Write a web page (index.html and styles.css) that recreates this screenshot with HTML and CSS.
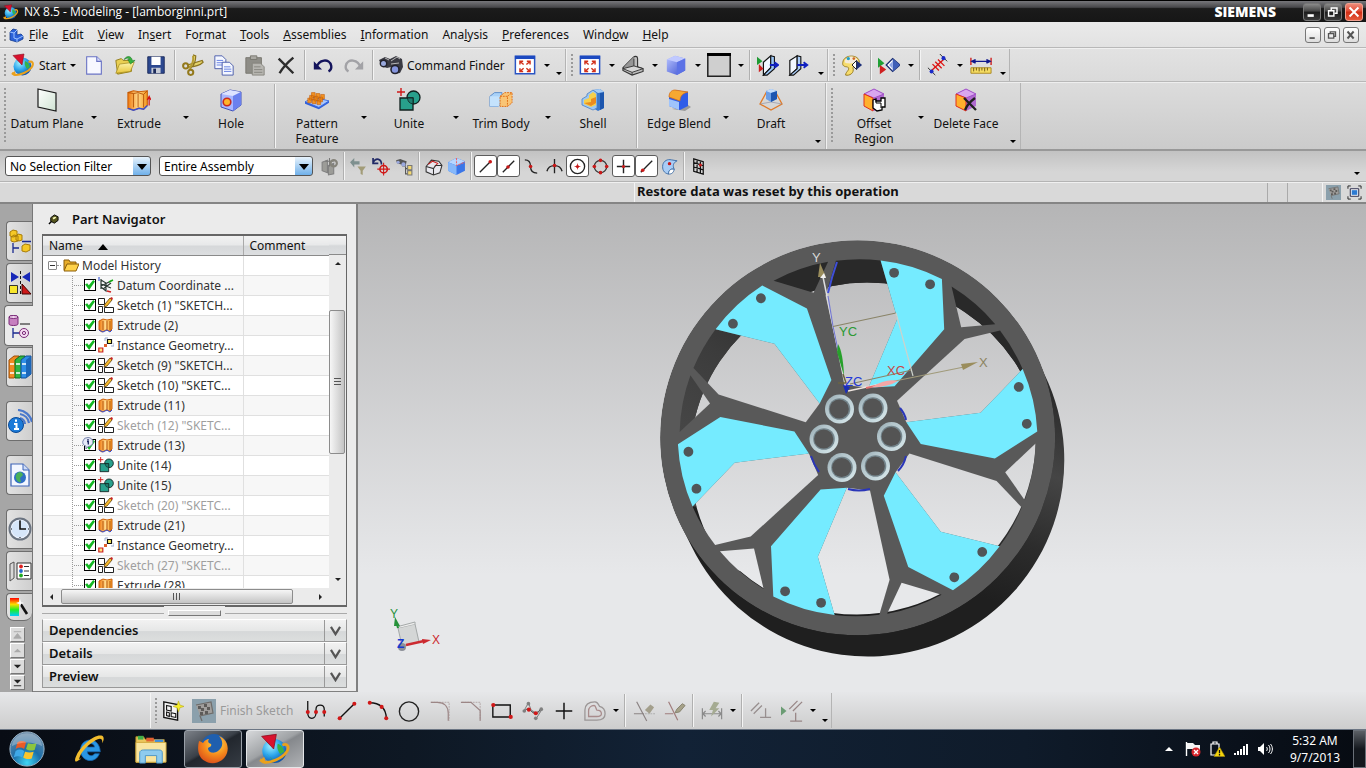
FILE: index.html
```html
<!DOCTYPE html>
<html lang="en">
<head>
  <meta charset="UTF-8" />
  <meta name="viewport" content="width=device-width, initial-scale=1.0" />
  <title>NX 8.5 - Modeling - [lamborginni.prt]</title>
  <link rel="stylesheet" href="styles.css">
</head>
<body>
  <!-- Icon sprite -->
  <svg class="sprite" aria-hidden="true">
    <defs>
      <linearGradient id="gBlue" x1="0" y1="0" x2="1" y2="1"><stop offset="0" stop-color="#b9c4ff"/><stop offset="1" stop-color="#3a50d0"/></linearGradient>
      <linearGradient id="gOrange" x1="0" y1="0" x2="1" y2="0"><stop offset="0" stop-color="#f07a10"/><stop offset=".5" stop-color="#ffd88a"/><stop offset="1" stop-color="#f59a20"/></linearGradient>
      <linearGradient id="gYellow" x1="0" y1="0" x2="0" y2="1"><stop offset="0" stop-color="#fdf6b0"/><stop offset="1" stop-color="#e8c53a"/></linearGradient>
      <linearGradient id="gPlane" x1="0" y1="0" x2="1" y2="1"><stop offset="0" stop-color="#ffffff"/><stop offset="1" stop-color="#cfe3d2"/></linearGradient>
      <radialGradient id="gGlobe" cx=".35" cy=".3" r=".8"><stop offset="0" stop-color="#9ff0ff"/><stop offset=".5" stop-color="#2aa4ec"/><stop offset="1" stop-color="#0b3f96"/></radialGradient>
      <radialGradient id="gOrb" cx=".5" cy=".9" r=".9"><stop offset="0" stop-color="#3fd6f5"/><stop offset=".45" stop-color="#1c6ea8"/><stop offset="1" stop-color="#6d8ca8"/></radialGradient>
      <radialGradient id="gFox" cx=".6" cy=".3" r=".8"><stop offset="0" stop-color="#ffe14a"/><stop offset=".5" stop-color="#f58a1c"/><stop offset="1" stop-color="#d6451a"/></radialGradient>
      <linearGradient id="gRainbow" x1="0" y1="0" x2="0" y2="1"><stop offset="0" stop-color="#f00"/><stop offset=".35" stop-color="#fd0"/><stop offset=".65" stop-color="#2e2"/><stop offset="1" stop-color="#0cf"/></linearGradient>
    </defs>
    <symbol id="i-nx" viewBox="0 0 24 24"><circle cx="11.500" cy="13.500" r="9" fill="url(#gGlobe)"/><path d="M6 16c2 1 3 4 6 5M14 8c3 1 4 3 5 6l-3 2c-1-2-3-4-2-8z" fill="#35b24a"/><path d="M2 19.500c-1 3 4 3.500 11 .5 7-3 10-8 8.500-10.500-.7-1-2-1.200-4-.5" fill="none" stroke="#eaa11c" stroke-width="2"/><path d="M0 21l4-3 1 5z" fill="#eaa11c"/><path d="M2 2.500L13 1l-2 11z" fill="#d9122e" stroke="#8c0d20" stroke-width=".6"/></symbol>
    <symbol id="i-part" viewBox="0 0 16 16"><path d="M2 5l3-3 4 1v5l4-1 2 2v3l-6 3-7-2z" fill="#2b62d9" stroke="#123a8c" stroke-width=".8"/><path d="M2 5l4 1v5l3 1v3M6 6l3-3M9 12l6-3" fill="none" stroke="#9cc2ff"/></symbol>
    <symbol id="i-new" viewBox="0 0 24 24"><path d="M4 3h11l5 5v14H4z" fill="#f7f8ff" stroke="#6a73c4" stroke-width="1.200"/><path d="M15 3v5h5" fill="#d4d9fa" stroke="#6a73c4" stroke-width="1.200"/></symbol>
    <symbol id="i-open" viewBox="0 0 24 24"><path d="M2 7l6-2 2 2h9v12L4 22z" fill="#e9cf52" stroke="#8f7a16"/><path d="M2 21L6 11l16-2-4 10z" fill="url(#gYellow)" stroke="#a38b20" stroke-width=".8"/><path d="M11 6c3-5 8-4 9 1h3l-5 4-3-5h2c-1-2-3-2-6 0z" fill="#36b23e" stroke="#1c7425" stroke-width=".6"/></symbol>
    <symbol id="i-save" viewBox="0 0 24 24"><path d="M3 3h18v18H3z" fill="#2c4890" stroke="#1b2a5a"/><path d="M7 3h10v9H7z" fill="#fff"/><path d="M7 15h10v6H7z" fill="#c6cbd6"/><path d="M9 16h3v5H9z" fill="#1b2a5a"/></symbol>
    <symbol id="i-cut" viewBox="0 0 24 24"><path d="M12 1l3 1c0 6-2 11-6 14M6 12l16-5 1 2c-4 4-9 5-16 5" fill="#e5d36a" stroke="#8a7420" stroke-width="1.300"/><circle cx="4" cy="13" r="2.800" fill="none" stroke="#93791c" stroke-width="2.200"/><circle cx="9.500" cy="20" r="2.800" fill="none" stroke="#93791c" stroke-width="2.200"/><path d="M12 2c1 5-1 10-4 14" fill="none" stroke="#b39b34" stroke-width="2"/></symbol>
    <symbol id="i-copy" viewBox="0 0 24 24"><path d="M2 2h8l4 4v10H2z" fill="#f4f7ff" stroke="#4659a8"/><path d="M4 7h7M4 9.500h8M4 12h8" stroke="#5f7be0"/><path d="M10 9h8l4 4v10H10z" fill="#f4f7ff" stroke="#4659a8"/><path d="M12 14h7M12 16.500h8M12 19h8" stroke="#5f7be0"/></symbol>
    <symbol id="i-paste" viewBox="0 0 24 24"><path d="M2 4h17v17H2z" fill="#8e8d87" stroke="#77766f"/><path d="M7 2h7v4H7z" fill="#a9a8a2" stroke="#77766f"/><path d="M9 10h9l4 4v9H9z" fill="#b6b5b0" stroke="#85847e"/><path d="M11 14h7M11 17h9M11 20h9" stroke="#85847e"/></symbol>
    <symbol id="i-x" viewBox="0 0 24 24"><path d="M4 5l16 16M20 4C14 9 9 14 5 21" fill="none" stroke="#2c2c2c" stroke-width="2.600"/></symbol>
    <symbol id="i-undo" viewBox="0 0 24 24"><path d="M5 15c2-9 14-11 16-2 .4 3-1 5-3 6" fill="none" stroke="#14145c" stroke-width="2.600"/><path d="M2 8v9h9z" fill="#14145c"/></symbol>
    <symbol id="i-redo" viewBox="0 0 24 24"><path d="M19 15C17 6 5 4 3 13c-.4 3 1 5 3 6" fill="none" stroke="#a2a2a6" stroke-width="2.600"/><path d="M22 8v9h-9z" fill="#a2a2a6"/></symbol>
    <symbol id="i-find" viewBox="0 0 24 24"><path d="M0 7l6-3 5 2 6-3 6 3 1 8-3 6-6 1-3-7-4 1-5-2z" fill="#3a3a42"/><circle cx="4.500" cy="10.500" r="3.200" fill="#98a8dc" stroke="#22222c" stroke-width="1.400"/><circle cx="16" cy="16.500" r="4" fill="#8595dd" stroke="#22222c" stroke-width="1.600"/><path d="M6 5l4 2M12 8l6-4 3 2M12 11l8-1" stroke="#b8b8b8" fill="none"/></symbol>
    <symbol id="i-fit" viewBox="0 0 24 24"><path d="M1.500 2.500h21v19h-21z" fill="#fff" stroke="#2a55c4" stroke-width="1.600"/><path d="M1 2h22v3.500H1z" fill="#1c49c0"/><path d="M7 8.500l3.500 3M17 8.500l-3.500 3M7 18.500l3.500-3M17 18.500l-3.500-3M6.500 11.500V8h3.500M14 8h3.500v3.500M6.500 15.500V19h3.500M14 19h3.500v-3.500" fill="none" stroke="#d2311c" stroke-width="1.600"/></symbol>
    <symbol id="i-bracket" viewBox="0 0 24 24"><path d="M3 13l9-9c2-2 5-2 5 1v9l6 2v3l-12 4-10-5v-3z" fill="#bdbdbd" stroke="#333" stroke-width="1.200"/><path d="M3 13l10-10v10l-11 3z" fill="#969696"/><path d="M1 16l12-3 10 3-12 4z" fill="#d6d6d6" stroke="#333"/><path d="M11 20v3M13 13V5" stroke="#333"/></symbol>
    <symbol id="i-cube" viewBox="0 0 24 24"><path d="M2 6l9-4 11 3v13l-9 5-11-4z" fill="url(#gBlue)"/><path d="M2 6l9-4 11 3-9 4z" fill="#c0c9ff"/><path d="M13 9l9-4v13l-9 5z" fill="#5c72e6"/></symbol>
    <symbol id="i-rect" viewBox="0 0 24 24"><path d="M.8.800h22.400v22.400H.8z" fill="#cfcfcf" stroke="#222" stroke-width="1.500"/><path d="M0 0h24v3H0z" fill="#000"/></symbol>
    <symbol id="i-clip" viewBox="0 0 24 24"><path d="M7 9l8-7v13l-8 8z" fill="#f2f8ff" stroke="#111" stroke-width="1.300"/><path d="M15 2l4 1v13l-8 7-4 0 8-8z" fill="#9cc6f6" stroke="#111" stroke-width="1.200"/><path d="M0 3l6 5-6 4z" fill="#1f9a33"/><path d="M2 11l5 5-5 4z" fill="#cc2020"/><path d="M14 12h8m-3-3l4 3-4 3" stroke="#1020c0" stroke-width="2" fill="none"/></symbol>
    <symbol id="i-clip2" viewBox="0 0 24 24"><path d="M2 7l8-5v14l-8 7z" fill="#f2f8ff" stroke="#111" stroke-width="1.300"/><path d="M10 2l4 1v13l-8 7H2l8-7z" fill="#a9cdf8" stroke="#111" stroke-width="1.200"/><path d="M10 12h10m-3-3l4 3-4 3" stroke="#1020c0" stroke-width="2" fill="none"/></symbol>
    <symbol id="i-palette" viewBox="0 0 24 24"><path d="M2 9c1-9 18-9 18 0 0 5-7 4-7 6 2 6-4 9-8 8 0-4 6-6 2-9-3 0-6-1-5-5z" fill="#f6dc6c" stroke="#94761c"/><path d="M4 9c2 2 12 2 14-2-1-6-14-6-14 2z" fill="#f5ead8"/><circle cx="8" cy="5" r="1.800" fill="#20a0c8"/><circle cx="14" cy="5" r="1.500" fill="#d06a20"/><path d="M12 12l5-5v10z" fill="#fff" stroke="#111"/><path d="M17 7l6 5-6 5z" fill="#1d2f78"/></symbol>
    <symbol id="i-showhide" viewBox="0 0 24 24"><path d="M0 4l7 6-7 5z" fill="#1fa035"/><path d="M2 12l7 5-7 5z" fill="#cf2020"/><path d="M9 12l7-7 8 7-8 7z" fill="#fff" stroke="#15286c" stroke-width="1.400"/><path d="M16 5l8 7-8 7z" fill="#3f5fb8"/><path d="M16 8l-4 4 4 4z" fill="#8ea6e6"/></symbol>
    <symbol id="i-dist" viewBox="0 0 24 24"><path d="M1 15l8 8M14 0l8 8" stroke="#222"/><path d="M5 18L18 6" stroke="#d11" stroke-width="1.400"/><path d="M6 11l7 7M9 8.500l7 7M12 6l7 7" stroke="#d11" stroke-width="1.400"/><circle cx="5" cy="19" r="2.200" fill="#1a2ac8"/><circle cx="18" cy="4.500" r="2.200" fill="#1a2ac8"/></symbol>
    <symbol id="i-ruler" viewBox="0 0 24 24"><path d="M1 4v8M23 4v8" stroke="#c11" stroke-width="1.400"/><path d="M2 8h20M6 6L2 8l4 2M18 6l4 2-4 2" stroke="#10188c" stroke-width="1.500" fill="#10188c"/><path d="M1 15h22v6H1z" fill="#f5dc62" stroke="#a8861c"/><path d="M4 15v4M7 15v3M10 15v4M13 15v3M16 15v4M19 15v3" stroke="#6b5310"/></symbol>
    <symbol id="i-datum" viewBox="0 0 24 24"><path d="M3 1l18 4v18L3 19z" fill="url(#gPlane)" stroke="#1a1a1a" stroke-width="1.200"/></symbol>
    <symbol id="i-extrude" viewBox="0 0 26 24"><path d="M1 4l6-2 6 1 9-1v16l-4 4-5-1-6 2-6-2z" fill="url(#gOrange)" stroke="#cc5f08" stroke-width="1.200"/><path d="M7 5v15M12 5v15M18 6v14M1 4l6 1 5-1 6 2 4-4" stroke="#b55408" fill="none"/><path d="M1 21l6 2 6-2 5 1 4-4" stroke="#3a4fd0" stroke-width="1.500" fill="none"/><path d="M24 18V9m-2 3l2-4 2 4" stroke="#d01616" stroke-width="1.300" fill="none"/></symbol>
    <symbol id="i-ext" viewBox="0 0 16 16"><path d="M1 4l4-2 4 1 5-1v10l-2 2-4-1-4 2-3-2z" fill="url(#gOrange)" stroke="#cc5f08"/><path d="M5 4v9M9 4v9M12 4v9" stroke="#b55408"/><path d="M1 13l4 2 4-2 3 2 2-2" stroke="#3a4fd0" fill="none"/></symbol>
    <symbol id="i-hole" viewBox="0 0 24 24"><path d="M2 6l9-4 11 2v13l-8 6-12-4z" fill="#a8b6ff" stroke="#4050b8"/><path d="M2 6l9-4 11 2-8 4z" fill="#dde3ff"/><path d="M14 8l8-4v13l-8 6z" fill="#6a80ee"/><circle cx="8" cy="14" r="3.800" fill="#ffb42a" stroke="#c8281c" stroke-width="1.600"/></symbol>
    <symbol id="i-pattern" viewBox="0 0 26 24"><path d="M0 14l10-5 16 4-11 7z" fill="#a9c8ff" stroke="#3d6be0"/><path d="M0 14v2l15 6 11-7v-2l-11 7z" fill="#2f5fdc"/><g fill="#f39322" stroke="#c05a08" stroke-width=".6"><path d="M7 4h4v5H7zM12 5h4v5h-4zM17 6h4v5h-4zM5 7h4v5H5zM10 8h4v5h-4zM15 9h4v5h-4zM3 10h4v5H3zM8 11h4v5H8zM13 12h4v5h-4z"/></g></symbol>
    <symbol id="i-unite" viewBox="0 0 24 24"><circle cx="16.500" cy="9.500" r="6.500" fill="#28a08c" stroke="#10201e" stroke-width="1.300"/><path d="M3 10h13v12H3z" fill="#28a08c" stroke="#10201e" stroke-width="1.300"/><path d="M10.500 10a6.500 6.500 0 0 0 5.500 6v-6z" fill="#1f7f70" stroke="#10201e" stroke-width=".8"/><path d="M4 0v8M0 4h8" stroke="#d01818" stroke-width="1.400"/></symbol>
    <symbol id="i-trim" viewBox="0 0 26 24"><path d="M1 8l5-4h8v11l-4 4H1z" fill="#a9d2f8" stroke="#5a8ac8"/><path d="M1 8h10v11H1z" fill="#c4e2fc"/><path d="M12 8l5-4h8v11l-5 4h-8z" fill="#f9c576" stroke="#e06a10" stroke-dasharray="2 1"/><path d="M12 8h8v11M20 8l5-4" stroke="#e06a10" fill="none" stroke-dasharray="2 1"/></symbol>
    <symbol id="i-shell" viewBox="0 0 24 24"><path d="M12 2l7-1 4 3v16l-6 3-5-3z" fill="#3a78cc"/><path d="M19 5l4-1v16l-4 2z" fill="#1c56ae"/><path d="M12 2l7-1 4 3-6 1z" fill="#a6cdf6"/><path d="M1 11l5-3V6l6-4 4 3v15l-4 2-11-5z" fill="#9cc8f4" stroke="#4a80c4" stroke-width=".8"/><path d="M3 12l5-2V7l4-3 3 2v11l-5 2-7-3z" fill="#f6d04c"/><path d="M3 15l7 3 5-3V9l-5 2v3z" fill="#ea8c20"/></symbol>
    <symbol id="i-blend" viewBox="0 0 24 24"><path d="M5 21l13 2 6-4-3-2z" fill="#9a9a9a"/><path d="M2 10c0-5 3-7 6-8l13 2v14l-8 4-11-4z" fill="#2e5ce8"/><path d="M2 9c0-5 3-7 6-7l13 2c-5 1-8 4-8 9z" fill="#f6a832" stroke="#d86c10" stroke-width=".7"/><path d="M2 11l10 3v8L2 18z" fill="#9fc4fb"/></symbol>
    <symbol id="i-draft" viewBox="0 0 24 24"><path d="M8 3L1 16l11 6 11-6-7-13" fill="none" stroke="#e07a28" stroke-width="1.300"/><path d="M1 16l11-2 11 2" fill="none" stroke="#889" stroke-width=".6"/><path d="M7 3l5-2 6 2v8l-6 3-5-3z" fill="#6b9ee6"/><path d="M7 3l5-2 6 2-6 2z" fill="#c4dcfa"/><path d="M12 5l6-2v8l-6 3z" fill="#1d55b0"/></symbol>
    <symbol id="i-offset" viewBox="0 0 24 24"><path d="M2 6l10-5 10 5v12l-10 5-10-5z" fill="#b06ad0"/><path d="M2 6l10-5 10 5-10 4z" fill="#d9a6ee" stroke="#a050c8"/><path d="M2 6l9 4v13l-9-5z" fill="#ffb02c" stroke="#e0301c"/><path d="M11 12l3-1v2l5 0v-3h4v9h-3v3l-5 1-4-3z" fill="#fff" stroke="#000" stroke-width="1.300"/><path d="M14 12v3h5v5" fill="none" stroke="#000"/></symbol>
    <symbol id="i-delface" viewBox="0 0 24 24"><path d="M2 6l10-5 10 5v12l-10 5-10-5z" fill="#b06ad0"/><path d="M2 6l10-5 10 5-10 4z" fill="#d9a6ee" stroke="#a050c8"/><path d="M2 6l10 4v13L2 18z" fill="#ffb02c" stroke="#e0301c"/><path d="M10 10l12 12M21 10c-4 3-8 7-10 12" stroke="#202020" stroke-width="2.300" fill="none"/></symbol>
    <symbol id="i-selgrey" viewBox="0 0 18 18"><path d="M2 5l5-2v12l-5-2zM8 8l5-2v10l-5 1z" fill="#9c9c98" stroke="#808080"/><path d="M9 1v8M5 4h8" stroke="#777"/><circle cx="13" cy="6" r="3" fill="none" stroke="#85837a" stroke-width="2"/></symbol>
    <symbol id="i-filter" viewBox="0 0 18 18"><path d="M1 5l4-4v3h5v3H5v3z" fill="#7e908f"/><path d="M8 9h8l-3 4v4l-2-1v-3z" fill="#a29c78"/></symbol>
    <symbol id="i-target" viewBox="0 0 18 18"><path d="M1 5c3-5 8-3 8 2M1 1v5h5" stroke="#222a66" stroke-width="1.600" fill="none"/><circle cx="11" cy="11.500" r="3.500" fill="none" stroke="#d01818" stroke-width="1.500"/><path d="M11 5.500v12M5 11.500h12" stroke="#d01818"/></symbol>
    <symbol id="i-findtree" viewBox="0 0 18 18"><path d="M1 3l4-1 3 1 3 1-1 5H7L6 7 2 6z" fill="#555"/><circle cx="3" cy="5" r="1.500" fill="#9aa8dd"/><circle cx="8" cy="7" r="2" fill="#9aa8dd"/><path d="M10 9v7h3M10 11h3" stroke="#555" fill="none"/><path d="M12 8h4v4h-4zM12 13h4v4h-4z" fill="#f3d870" stroke="#777"/></symbol>
    <symbol id="i-wirebox" viewBox="0 0 18 18"><path d="M2 9l5-6 7 1 3 4-2 7-6 2-7-3z" fill="#e8e8ee" stroke="#333"/><path d="M4 7l4-3 5 2-3 3" stroke="#c22" fill="none"/><path d="M2 9l7 2 2-3 6 0M9 11v6" fill="none" stroke="#333"/></symbol>
    <symbol id="i-bluebox" viewBox="0 0 18 18"><path d="M1 5l8-4 8 3v9l-8 4-8-4z" fill="#3b76e8"/><path d="M1 5l8-4 8 3-8 4z" fill="#b8d7ff"/><path d="M1 5l8 3v9l-8-4z" fill="#86b8fa"/><path d="M9 1v7l8-3" stroke="#e66" fill="none" stroke-dasharray="2 1"/></symbol>
    <symbol id="i-end" viewBox="0 0 20 20"><path d="M4 16L15 5" stroke="#222" stroke-width="1.400"/><circle cx="15" cy="5" r="1.900" fill="#c81818"/></symbol>
    <symbol id="i-mid" viewBox="0 0 20 20"><path d="M4 16L16 4" stroke="#222" stroke-width="1.400"/><circle cx="9.500" cy="10.500" r="1.900" fill="#c81818"/></symbol>
    <symbol id="i-curve" viewBox="0 0 20 20"><path d="M3 3c5 0 6 3 6 7s2 7 7 7" fill="none" stroke="#222" stroke-width="1.400"/><circle cx="9" cy="10" r="1.900" fill="#c81818"/></symbol>
    <symbol id="i-inter" viewBox="0 0 20 20"><path d="M10 2v15M2 15C4 7 16 7 18 15" fill="none" stroke="#222" stroke-width="1.400"/><circle cx="10" cy="9" r="1.900" fill="#c81818"/></symbol>
    <symbol id="i-center" viewBox="0 0 20 20"><circle cx="10" cy="10" r="7.500" fill="none" stroke="#222" stroke-width="1.400"/><circle cx="10" cy="10" r="1.700" fill="#c81818"/><path d="M7 10h6M10 7v6" stroke="#c81818" stroke-width=".8"/></symbol>
    <symbol id="i-quad" viewBox="0 0 20 20"><circle cx="10" cy="10" r="6.500" fill="none" stroke="#333" stroke-width="1.400"/><g fill="#c81818"><circle cx="10" cy="3.500" r="1.900"/><circle cx="10" cy="16.500" r="1.900"/><circle cx="3.500" cy="10" r="1.900"/><circle cx="16.500" cy="10" r="1.900"/></g></symbol>
    <symbol id="i-plus" viewBox="0 0 20 20"><path d="M10 3v14M3 10h14" stroke="#222" stroke-width="1.500"/><circle cx="10" cy="10" r="1.700" fill="#c81818"/></symbol>
    <symbol id="i-oncurve" viewBox="0 0 20 20"><path d="M4 16L16 4" stroke="#222" stroke-width="1.400"/><circle cx="6" cy="14" r="1.900" fill="#c81818"/></symbol>
    <symbol id="i-onface" viewBox="0 0 20 20"><path d="M3 8c1-4 5-6 9-5l6 1c-4 2-5 5-3 9-4-1-6 1-6 5-5-1-7-5-6-10z" fill="#a9cdf6" stroke="#3f6fa8"/><path d="M15 13c-1 4-3 5-6 5 0-4 2-6 6-5z" fill="#fff" stroke="#3f6fa8"/><circle cx="10" cy="7" r="1.800" fill="#c81818"/></symbol>
    <symbol id="i-grid" viewBox="0 0 20 20"><path d="M5 2l10 3v13L5 15zM8.500 3v13M12 4v13M5 6l10 3M5 10.500l10 3" fill="none" stroke="#111" stroke-width="1.300"/><circle cx="12" cy="8.500" r="1.600" fill="#c81818"/></symbol>
    <symbol id="i-flag" viewBox="0 0 24 24"><path d="M0 0h24v24H0z" fill="#8ba0ac"/><path d="M4 6l15-3 2 11-13 3 2 5" fill="#a09e9c" stroke="#6e6c6a" stroke-width="1.200"/><path d="M6 7h3v3H6zM12 5h3v3h-3zM9 9h3v3H9zM15 8h3v3h-3zM8 13h3v3H8zM13 12h3v3h-3z" fill="#5d5b59"/></symbol>
    <symbol id="i-full" viewBox="0 0 16 16"><path d="M1 4V1h3M12 1h3v3M15 12v3h-3M4 15H1v-3" fill="none" stroke="#222"/><path d="M3.500 4h9v8h-9z" fill="#fff" stroke="#224"/><path d="M5 5.500h6v5H5z" fill="#2c7ad2"/></symbol>
    <symbol id="i-pin" viewBox="0 0 12 12"><path d="M1 11l3-3" stroke="#000" stroke-width="1.500"/><path d="M3 4l4-3 4 2v4L7 10 3 8z" fill="#55551e" stroke="#000"/><path d="M5 4l3-1 1 1-3 2z" fill="#ffffc0"/></symbol>
    <!-- resource bar -->
    <symbol id="i-asm" viewBox="0 0 24 24"><path d="M2 3l3-2 4 1v5l-4 1-3-1zM3 8l3-2 4 1v5l-4 1-3-1zM8 7l2-2 4 1v5l-3 1-3-1zM14 17l3-2 5 1v5l-4 2-4-1z" fill="#f5c826" stroke="#a87c08"/><path d="M14 12.500h9M5 14v10M5 19h6" stroke="#1a2a90" stroke-width="1.300"/></symbol>
    <symbol id="i-constraint" viewBox="0 0 24 24"><path d="M3 1l8 5-8 5zM22 1l-8 5 8 5z" fill="#1728b8"/><path d="M12.500 0v24" stroke="#111" stroke-dasharray="3 2"/><path d="M1.500 14.500h8v8h-8z" fill="#f7e62c" stroke="#333"/><path d="M14 13v10h9z" fill="#cc1818" stroke="#400"/></symbol>
    <symbol id="i-partnav" viewBox="0 0 24 24"><path d="M2 3c0-2 9-2 9 0v7c0 2-9 2-9 0z" fill="#c67fc0" stroke="#7a2a78"/><ellipse cx="6.500" cy="3" rx="4.500" ry="1.500" fill="#f2d4f0" stroke="#7a2a78"/><path d="M13 10h10" stroke="#111"/><path d="M6 14v10M6 19h6" stroke="#1a2a90" stroke-width="1.300"/><circle cx="17" cy="19" r="4.500" fill="#f5dcf2" stroke="#7a2a78"/><circle cx="17" cy="19" r="1.600" fill="none" stroke="#7a2a78"/></symbol>
    <symbol id="i-books" viewBox="0 0 24 24"><path d="M1 5l5-4h5v18l-5 4H1z" fill="#ef8a20" stroke="#9c4c08"/><path d="M7 5l5-4h5v18l-5 4H7z" fill="#2eb440" stroke="#0f6a20"/><path d="M13 5l5-4h5v18l-5 4h-5z" fill="#2f8ee6" stroke="#134c94"/><path d="M18 5l5-4v18l-5 4z" fill="#1b66b8"/><path d="M2 9h4M8 9h4M14 9h4M2 18h4M8 18h4M14 18h4" stroke="#fff" stroke-width="1.300"/></symbol>
    <symbol id="i-info" viewBox="0 0 24 24"><path d="M12 9a7 7 0 0 1 5 6M12 5a11 11 0 0 1 9 9M10 1a15 15 0 0 1 14 12" fill="none" stroke="#4a78cc" stroke-width="2.200"/><circle cx="8" cy="16" r="7.500" fill="#1b7ad8" stroke="#0b4a96"/><path d="M8 10.500v2.200M6 15h2.500v5M6 20h5" stroke="#fff" stroke-width="2" fill="none"/></symbol>
    <symbol id="i-web" viewBox="0 0 24 24"><path d="M3 1h12l6 6v16H3z" fill="#f2f6ff" stroke="#3e65b8" stroke-width="1.200"/><path d="M15 1v6h6" fill="#cfdcf6" stroke="#3e65b8"/><circle cx="12" cy="14.500" r="6" fill="#2f6fc4"/><path d="M8 12c2-4 6-4 7 0l-3 3 1 4c-3 1-6-3-5-7z" fill="#48b058"/></symbol>
    <symbol id="i-clock" viewBox="0 0 24 24"><circle cx="12" cy="12" r="10.500" fill="#eef4ff" stroke="#6a7380" stroke-width="2"/><circle cx="12" cy="12" r="8.500" fill="#d6e6fa"/><path d="M12 4v8h6" fill="none" stroke="#111" stroke-width="1.600"/><path d="M12 3v1M12 20v1M3 12h1M20 12h1" stroke="#111"/></symbol>
    <symbol id="i-roles" viewBox="0 0 24 24"><path d="M2 5l4-2v16l-4 3z" fill="#d8d8d8" stroke="#555"/><path d="M9 4h14v16H9z" fill="#fff" stroke="#333"/><circle cx="13" cy="7.500" r="1.900" fill="#d22"/><circle cx="13" cy="12" r="1.900" fill="#26c"/><circle cx="13" cy="16.500" r="1.900" fill="#2a2"/><path d="M16 7.500h5M16 12h5M16 16.500h5" stroke="#333"/></symbol>
    <symbol id="i-wand" viewBox="0 0 24 20"><path d="M2 1h9v18H2z" fill="url(#gRainbow)"/><path d="M12 6l7 11" stroke="#111" stroke-width="2.600"/><path d="M12 2l1 3 3 1-3 1-1 3-1-3-3-1 3-1z" fill="#fff"/></symbol>
    <!-- tree -->
    <symbol id="t-folder" viewBox="0 0 16 14"><path d="M1 12V2h5l1 2h6v3" fill="#e8ad28" stroke="#8a5c08"/><path d="M1 13l3-7h12l-3 7z" fill="#ffd24a" stroke="#8a5c08"/></symbol>
    <symbol id="t-csys" viewBox="0 0 16 16"><path d="M3 2v10M3 3l5 3v8l-5-4M3 9l10-5M3 7l10 4M5 12l8-6" fill="none" stroke="#2c3a34" stroke-width="1.200"/><path d="M1 0v4" stroke="#24c"/><path d="M11 5l4-2" stroke="#1a1" stroke-width="1.500"/><path d="M9 14l4 1" stroke="#c22" stroke-width="1.500"/></symbol>
    <symbol id="t-sketch" viewBox="0 0 16 16"><path d="M.5 1.500h6v6h-6zM.5 9.500h4v6h-4zM6.500 10.500h9v5h-9z" fill="#fff" stroke="#222"/><path d="M6 10l1-3 5-6 2 2-5 6z" fill="#f6b82c" stroke="#5c3c08" stroke-width=".8"/><path d="M12 1l2-1 1 2-1 1z" fill="#c22"/></symbol>
    <symbol id="t-inst" viewBox="0 0 16 16"><path d="M.8 11h4v4h-4z" fill="#ffe27a" stroke="#c22" stroke-width="1.200"/><path d="M9.500 2.500h4v4h-4z" fill="#fff05a" stroke="#111" stroke-width="1.200"/><path d="M6 7h3v3H6z" fill="#e0602a"/><path d="M7 4V1h3M13 9h3V6" fill="none" stroke="#99a8cc"/></symbol>
    <symbol id="t-info" viewBox="0 0 12 13"><path d="M6 .5a5 4.500 0 0 1 0 9L4 12V9.200A5 4.500 0 0 1 6 .5z" fill="#e6eaf8" stroke="#7884ac"/><path d="M6 2v1.400M5 4.500h1.300V7.500" stroke="#1a2460" stroke-width="1.300" fill="none"/></symbol>
    <!-- sketch toolbar -->
    <symbol id="s-task" viewBox="0 0 24 24"><path d="M2 2l15 3v17L2 19z" fill="#f4f4f4" stroke="#111" stroke-width="1.500"/><path d="M5 6l5 1v5l-5-1zM5 13l3 1v4l-3-1zM10 14l5 1v4l-5-1z" fill="none" stroke="#111" stroke-width="1.200"/><path d="M18 1l1.500 4.500L24 7l-4.500 1.500L18 13l-1.500-4.500L12 7l4.500-1.500z" fill="#f4ec2a" stroke="#b8a810" stroke-width=".6"/></symbol>
    <symbol id="s-profile" viewBox="0 0 24 24"><path d="M3 1v13c0 8 9 8 9 0V10c0-6 9-6 9 0v8" fill="none" stroke="#111" stroke-width="1.400"/><g fill="#d01818"><circle cx="3" cy="13" r="2.200"/><circle cx="12" cy="13" r="2.200"/><circle cx="21" cy="13" r="2.200"/></g></symbol>
    <symbol id="s-line" viewBox="0 0 24 24"><path d="M4 20L20 4" stroke="#111" stroke-width="1.500"/><g fill="#d01818"><circle cx="4" cy="20" r="2.200"/><circle cx="20" cy="4" r="2.200"/></g></symbol>
    <symbol id="s-arc" viewBox="0 0 24 24"><path d="M3 3c11 0 18 6 18 17" fill="none" stroke="#111" stroke-width="1.500"/><g fill="#d01818"><circle cx="3" cy="3" r="2.200"/><circle cx="16" cy="7.500" r="2.200"/><circle cx="21" cy="20" r="2.200"/></g></symbol>
    <symbol id="s-circle" viewBox="0 0 24 24"><circle cx="12" cy="12.500" r="10.500" fill="none" stroke="#222" stroke-width="1.500"/></symbol>
    <symbol id="s-fillet" viewBox="0 0 24 24"><path d="M2 2.500h20v20" fill="none" stroke="#b0a4a4" stroke-dasharray="2 1"/><path d="M2 2.500h7c8 0 12 5 12 12v8" fill="none" stroke="#9c8686" stroke-width="1.300"/></symbol>
    <symbol id="s-chamfer" viewBox="0 0 24 24"><path d="M2 2.500h20v20" fill="none" stroke="#b0a4a4" stroke-dasharray="2 1"/><path d="M1 2.500h11l10 9v11" fill="none" stroke="#9c8686" stroke-width="1.300"/></symbol>
    <symbol id="s-rect" viewBox="0 0 24 24"><path d="M2 5.500h19v13H2z" fill="none" stroke="#111" stroke-width="1.500"/><g fill="#d01818"><circle cx="2.500" cy="5.500" r="2.300"/><circle cx="21.500" cy="18.500" r="2.300"/></g></symbol>
    <symbol id="s-spline" viewBox="0 0 24 24"><path d="M2 12L7 3l3 8 7 4 5-5-7 11" fill="none" stroke="#777"/><path d="M2 13c4-6 7-2 9 0s6 2 10-4" fill="none" stroke="#222"/><g fill="#808080"><circle cx="7" cy="4" r="2"/><circle cx="2.500" cy="12" r="2"/><circle cx="21" cy="10" r="2"/><circle cx="15" cy="20" r="2"/></g><g fill="#d01818"><circle cx="7.500" cy="10.500" r="2.200"/><circle cx="15" cy="14.500" r="2.200"/></g></symbol>
    <symbol id="s-point" viewBox="0 0 24 24"><path d="M12 3v18M3 12h18" stroke="#111" stroke-width="1.600"/></symbol>
    <symbol id="s-offset" viewBox="0 0 24 24"><path d="M1 22V11c0-6 4-9 11-9 3 0 4 3 5 5 4 1 6 4 6 8 0 5-4 7-9 7z" fill="none" stroke="#9b9696" stroke-width="1.400"/><path d="M5 18v-6c0-4 3-6 6-6 2 0 2 4 3 5 4 0 5 2 5 4s-2 3-5 3z" fill="none" stroke="#a88c8c" stroke-width="1.400"/></symbol>
    <symbol id="s-trim" viewBox="0 0 24 24"><path d="M4 2l11 21M1 15h11" stroke="#8c8484" stroke-width="1.300"/><path d="M13 15h11" stroke="#aaa" stroke-dasharray="2 1"/><path d="M13 11l6-6 4 3-5 7z" fill="#a39f8c"/></symbol>
    <symbol id="s-extend" viewBox="0 0 24 24"><path d="M5 2l10 20M1 15h9" stroke="#a07c7c" stroke-width="1.300"/><path d="M12 14l2-4 6-6 3 2-6 7z" fill="#a5a188" stroke="#84806c"/></symbol>
    <symbol id="s-dim" viewBox="0 0 24 24"><path d="M1.500 9v12M22.500 9v12M2 15h20M5 12l-3 3 3 3M19 12l3 3-3 3" fill="none" stroke="#8a8a8a" stroke-width="1.300"/><path d="M14 2l6 1-4 6h4l-9 9 2-7H9z" fill="#a5ab92"/></symbol>
    <symbol id="s-constr" viewBox="0 0 24 24"><path d="M1 12L10 3M4 15L13 6M11 19h12M17 9v10" stroke="#988f8f" stroke-width="1.400"/></symbol>
    <symbol id="s-infer" viewBox="0 0 24 24"><path d="M0 7l6 5-6 5z" fill="#6b9c74"/><path d="M9 10L18 1M13 12L23 2M10 23h13M16 14v9" stroke="#988686" stroke-width="1.400"/></symbol>
    <!-- taskbar -->
    <symbol id="b-start" viewBox="0 0 40 40"><circle cx="20" cy="20" r="18" fill="url(#gOrb)" stroke="#9fb8cc"/><path d="M10 13c3-2 6-2 9 0l-2 7c-3-2-6-2-9 0z" fill="#ea5b26"/><path d="M21 14c3 1 6 1 9 0l-2 7c-3 1-6 1-9-1z" fill="#8cc63f"/><path d="M8 22c3-2 6-2 9 0l-2 7c-3-2-6-2-9 0z" fill="#3fa9e8"/><path d="M18 23c3 1 6 1 9 0l-2 7c-3 1-6 1-9-1z" fill="#fbc52c"/><path d="M4 17c2-18 30-18 32 0-10-5-22-5-32 0z" fill="#fff" opacity=".28"/></symbol>
    <symbol id="b-ie" viewBox="0 0 34 34"><path d="M28 22c-4 11-19 9-20-3C7 5 28 2 29 20H15c1 5 6 5 8 2zM15 15h8c-1-5-7-5-8 0z" fill="#2a96e4" stroke="#1568b4" stroke-width=".8"/><path d="M9 26C3 33 0 31 4 23 9 13 24 0 31 3c3 2 1 6 0 8 1-6-3-6-9-2C12 15 5 26 7 29z" fill="#f2bd2e"/></symbol>
    <symbol id="b-folder" viewBox="0 0 34 32"><path d="M1 3h8l2 3h20v24H1z" fill="#ecc75c" stroke="#b78d24"/><path d="M3 2h6v4H3z" fill="#3fae49"/><path d="M12 4h8v4h-8z" fill="#e06030"/><path d="M21 6h9v3h-9z" fill="#3f8fe0"/><path d="M1 9h32v21H1z" fill="#f9e5a0" stroke="#d0a93e"/><path d="M5 31V20c0-2 2-3 4-3h16c3 0 4 1 4 3v11h-6v-8H11v8z" fill="#8ecbee" stroke="#4b94c6"/></symbol>
    <symbol id="b-firefox" viewBox="0 0 32 32"><circle cx="17" cy="14" r="13" fill="#1f5fae"/><path d="M2 8c2 1 3 1 4 2 2-3 4-4 6-4-2 3 0 4 2 5 1 2-1 3-3 4 0 5 6 6 10 3 6-4 5-11 1-15 8 3 10 11 8 17-3 9-14 13-22 8C1 24 0 16 2 8z" fill="url(#gFox)"/></symbol>
    <symbol id="b-flag" viewBox="0 0 16 16"><path d="M1.500 1v14" stroke="#fff" stroke-width="1.400"/><path d="M2 2h6l2 2h5v5H9L7 8H2z" fill="#f4f4f4"/><circle cx="11" cy="11" r="4.500" fill="#d8262c"/><path d="M9 9l4 4M13 9l-4 4" stroke="#fff" stroke-width="1.400"/></symbol>
    <symbol id="b-battery" viewBox="0 0 16 16"><path d="M2 3h8v11H2zM4 1h4v2H4z" fill="none" stroke="#fff" stroke-width="1.200"/><path d="M10.500 6L16 15.500H5z" fill="#f5d40c" stroke="#9a8408" stroke-width=".6"/><path d="M10.500 9v3.200M10.500 13v1.500" stroke="#111" stroke-width="1.300"/></symbol>
    <symbol id="b-signal" viewBox="0 0 16 16"><path d="M1 12h2v2H1zM4 10h2v4H4zM7 8h2v6H7zM10 5h2v9h-2zM13 3h2v11h-2z" fill="#fff"/></symbol>
    <symbol id="b-volume" viewBox="0 0 16 16"><path d="M1 6h2l4-4v12l-4-4H1z" fill="#fff"/><path d="M9.500 6c1 1 1 3 0 4M11.500 4c2 2 2 6 0 8M13.500 3c2.500 3 2.500 7 0 10" fill="none" stroke="#fff"/></symbol>
  </svg>

  <header class="titlebar">
    <svg class="ico16"><use href="#i-nx"/></svg>
    <h1>NX 8.5 - Modeling - [lamborginni.prt]</h1>
    <span class="brand">SIEMENS</span>
    <div class="win-buttons">
      <button type="button" aria-label="Minimize"><svg viewBox="0 0 18 18"><path d="M4 13h7" stroke="#fff" stroke-width="3"/></svg></button>
      <button type="button" aria-label="Restore"><svg viewBox="0 0 18 18"><path d="M4 7.500h6v6H4zM7 7V4.500h6.500v6H11" fill="none" stroke="#fff" stroke-width="1.600"/></svg></button>
      <button type="button" class="close" aria-label="Close"><svg viewBox="0 0 18 18"><path d="M4 4l10 10M14 4L4 14" stroke="#fff" stroke-width="2.200"/></svg></button>
    </div>
  </header>

  <nav class="menubar">
    <span class="grip"></span>
    <svg class="ico16"><use href="#i-part"/></svg>
    <ul>
      <li><a href="#"><u>F</u>ile</a></li>
      <li><a href="#"><u>E</u>dit</a></li>
      <li><a href="#"><u>V</u>iew</a></li>
      <li><a href="#">In<u>s</u>ert</a></li>
      <li><a href="#">Fo<u>r</u>mat</a></li>
      <li><a href="#"><u>T</u>ools</a></li>
      <li><a href="#"><u>A</u>ssemblies</a></li>
      <li><a href="#"><u>I</u>nformation</a></li>
      <li><a href="#">Ana<u>l</u>ysis</a></li>
      <li><a href="#"><u>P</u>references</a></li>
      <li><a href="#">Wind<u>o</u>w</a></li>
      <li><a href="#"><u>H</u>elp</a></li>
    </ul>
    <div class="doc-buttons">
      <button type="button" aria-label="Minimize part"><svg viewBox="0 0 16 16"><path d="M4 11.500h6" stroke="#555" stroke-width="2"/></svg></button>
      <button type="button" aria-label="Restore part"><svg viewBox="0 0 16 16"><path d="M4 6.500h6v5H4zM6 6V4.500h6v5h-2" fill="none" stroke="#555" stroke-width="1.500"/></svg></button>
      <button type="button" aria-label="Close part"><svg viewBox="0 0 16 16"><path d="M4 4l7 8M11 4l-7 8" stroke="#555" stroke-width="2.200"/></svg></button>
    </div>
  </nav>

  <div class="toolbars row-standard">
    <div class="group">
      <span class="grip"></span>
      <button type="button" class="text-tool"><svg class="ico24"><use href="#i-nx"/></svg>Start<i class="tri"></i></button>
      <button type="button" class="tool" aria-label="New"><svg><use href="#i-new"/></svg></button>
      <button type="button" class="tool" aria-label="Open"><svg><use href="#i-open"/></svg></button>
      <button type="button" class="tool" aria-label="Save"><svg><use href="#i-save"/></svg></button>
      <span class="sep"></span>
      <button type="button" class="tool" aria-label="Cut"><svg><use href="#i-cut"/></svg></button>
      <button type="button" class="tool" aria-label="Copy"><svg><use href="#i-copy"/></svg></button>
      <button type="button" class="tool" aria-label="Paste"><svg><use href="#i-paste"/></svg></button>
      <button type="button" class="tool" aria-label="Delete"><svg><use href="#i-x"/></svg></button>
      <span class="sep"></span>
      <button type="button" class="tool" aria-label="Undo"><svg><use href="#i-undo"/></svg></button>
      <button type="button" class="tool" aria-label="Redo"><svg><use href="#i-redo"/></svg></button>
      <span class="sep"></span>
      <button type="button" class="text-tool finder"><svg class="ico24"><use href="#i-find"/></svg>Command Finder</button>
      <button type="button" class="tool" aria-label="Fit"><svg><use href="#i-fit"/></svg></button>
      <button type="button" class="drop" aria-label="Fit options"></button>
      <button type="button" class="drop low" aria-label="Toolbar options"></button>
    </div>
    <div class="group">
      <span class="grip"></span>
      <button type="button" class="tool" aria-label="Fit view"><svg><use href="#i-fit"/></svg></button>
      <button type="button" class="drop" aria-label="Fit view options"></button>
      <button type="button" class="tool" aria-label="Orient view"><svg><use href="#i-bracket"/></svg></button>
      <button type="button" class="drop" aria-label="Orient options"></button>
      <button type="button" class="tool" aria-label="Shaded"><svg><use href="#i-cube"/></svg></button>
      <button type="button" class="drop" aria-label="Shading options"></button>
      <button type="button" class="tool swatch" aria-label="Background"><svg><use href="#i-rect"/></svg></button>
      <button type="button" class="drop" aria-label="Background options"></button>
      <span class="sep"></span>
      <button type="button" class="tool" aria-label="Clip section"><svg><use href="#i-clip"/></svg></button>
      <button type="button" class="tool" aria-label="Edit section"><svg><use href="#i-clip2"/></svg></button>
      <button type="button" class="drop low" aria-label="Toolbar options"></button>
    </div>
    <div class="group">
      <span class="grip"></span>
      <button type="button" class="tool" aria-label="Edit object display"><svg><use href="#i-palette"/></svg></button>
      <span class="sep"></span>
      <button type="button" class="tool" aria-label="Show and hide"><svg><use href="#i-showhide"/></svg></button>
      <button type="button" class="drop" aria-label="Show and hide options"></button>
      <span class="sep"></span>
      <button type="button" class="tool" aria-label="Measure distance"><svg><use href="#i-dist"/></svg></button>
      <button type="button" class="drop" aria-label="Measure options"></button>
      <button type="button" class="tool" aria-label="Simple distance"><svg><use href="#i-ruler"/></svg></button>
      <button type="button" class="drop low" aria-label="Toolbar options"></button>
    </div>
  </div>

  <div class="toolbars row-feature">
    <div class="group">
      <span class="grip"></span>
      <button type="button" class="feature"><svg><use href="#i-datum"/></svg>Datum Plane</button>
      <button type="button" class="drop" aria-label="Datum options"></button>
      <button type="button" class="feature"><svg><use href="#i-extrude"/></svg>Extrude</button>
      <button type="button" class="drop" aria-label="Extrude options"></button>
      <button type="button" class="feature"><svg><use href="#i-hole"/></svg>Hole</button>
      <span class="sep"></span>
      <button type="button" class="feature"><svg><use href="#i-pattern"/></svg>Pattern Feature</button>
      <button type="button" class="drop" aria-label="Pattern options"></button>
      <button type="button" class="feature"><svg><use href="#i-unite"/></svg>Unite</button>
      <button type="button" class="drop" aria-label="Unite options"></button>
      <button type="button" class="feature"><svg><use href="#i-trim"/></svg>Trim Body</button>
      <button type="button" class="drop" aria-label="Trim options"></button>
      <button type="button" class="feature"><svg><use href="#i-shell"/></svg>Shell</button>
      <span class="sep"></span>
      <button type="button" class="feature"><svg><use href="#i-blend"/></svg>Edge Blend</button>
      <button type="button" class="drop" aria-label="Blend options"></button>
      <button type="button" class="feature"><svg><use href="#i-draft"/></svg>Draft</button>
      <button type="button" class="drop low" aria-label="Toolbar options"></button>
    </div>
    <div class="group">
      <span class="grip"></span>
      <button type="button" class="feature"><svg><use href="#i-offset"/></svg>Offset Region</button>
      <button type="button" class="drop" aria-label="Offset options"></button>
      <button type="button" class="feature"><svg><use href="#i-delface"/></svg>Delete Face</button>
      <button type="button" class="drop low" aria-label="Toolbar options"></button>
    </div>
  </div>

  <div class="selection-bar">
    <span class="combo filter"><select aria-label="Selection filter"><option>No Selection Filter</option></select><i class="tri"></i></span>
    <span class="combo scope"><select aria-label="Selection scope"><option>Entire Assembly</option></select><i class="tri"></i></span>
    <button type="button" class="snap" aria-label="General filters"><svg><use href="#i-selgrey"/></svg></button>
    <span class="sep"></span>
    <button type="button" class="snap" aria-label="Reset filters"><svg><use href="#i-filter"/></svg></button>
    <button type="button" class="snap" aria-label="Allow selection"><svg><use href="#i-target"/></svg></button>
    <button type="button" class="snap" aria-label="Find in navigator"><svg><use href="#i-findtree"/></svg></button>
    <span class="sep"></span>
    <button type="button" class="snap" aria-label="Hidden wireframe"><svg><use href="#i-wirebox"/></svg></button>
    <button type="button" class="snap" aria-label="Shaded body"><svg><use href="#i-bluebox"/></svg></button>
    <span class="sep"></span>
    <button type="button" class="snap on" aria-label="End point"><svg><use href="#i-end"/></svg></button>
    <button type="button" class="snap on" aria-label="Mid point"><svg><use href="#i-mid"/></svg></button>
    <button type="button" class="snap" aria-label="Control point"><svg><use href="#i-curve"/></svg></button>
    <button type="button" class="snap" aria-label="Intersection"><svg><use href="#i-inter"/></svg></button>
    <button type="button" class="snap on" aria-label="Arc center"><svg><use href="#i-center"/></svg></button>
    <button type="button" class="snap" aria-label="Quadrant point"><svg><use href="#i-quad"/></svg></button>
    <button type="button" class="snap on" aria-label="Existing point"><svg><use href="#i-plus"/></svg></button>
    <button type="button" class="snap on" aria-label="Point on curve"><svg><use href="#i-oncurve"/></svg></button>
    <button type="button" class="snap" aria-label="Point on face"><svg><use href="#i-onface"/></svg></button>
    <span class="sep"></span>
    <button type="button" class="snap" aria-label="Grid point"><svg><use href="#i-grid"/></svg></button>
    <button type="button" class="drop low last" aria-label="Toolbar options"></button>
  </div>

  <div class="status-line">
    <span class="cue"></span>
    <span class="message">Restore data was reset by this operation</span>
    <span class="cell"></span>
    <span class="cell wide"></span>
    <span class="icons"><svg><use href="#i-flag"/></svg><svg><use href="#i-full"/></svg></span>
  </div>

  <main class="workspace">
    <div class="resource-bar">
      <button type="button" class="tab" aria-label="Assembly Navigator"><svg><use href="#i-asm"/></svg></button>
      <button type="button" class="tab" aria-label="Constraint Navigator"><svg><use href="#i-constraint"/></svg></button>
      <button type="button" class="tab active" aria-label="Part Navigator"><svg><use href="#i-partnav"/></svg></button>
      <button type="button" class="tab" aria-label="Reuse Library"><svg><use href="#i-books"/></svg></button>
      <button type="button" class="tab apart" aria-label="HD3D Tools"><svg><use href="#i-info"/></svg></button>
      <button type="button" class="tab apart" aria-label="Web Browser"><svg><use href="#i-web"/></svg></button>
      <button type="button" class="tab apart" aria-label="History"><svg><use href="#i-clock"/></svg></button>
      <button type="button" class="tab" aria-label="Roles"><svg><use href="#i-roles"/></svg></button>
      <button type="button" class="tab cut" aria-label="System Materials"><svg><use href="#i-wand"/></svg></button>
      <div class="scrollers">
        <button type="button" aria-label="First" disabled><svg viewBox="0 0 14 14"><path d="M3 4h8M3 11l4-5 4 5z" fill="#aaa" stroke="#aaa"/></svg></button>
        <button type="button" aria-label="Up" disabled><svg viewBox="0 0 14 14"><path d="M3 9l4-4 4 4z" fill="#aaa"/></svg></button>
        <button type="button" aria-label="Down"><svg viewBox="0 0 14 14"><path d="M3 5l4 4 4-4z" fill="#222"/></svg></button>
        <button type="button" aria-label="Last"><svg viewBox="0 0 14 14"><path d="M3 4l4 4 4-4z" fill="#222"/><path d="M3 10.500h8" stroke="#222"/></svg></button>
      </div>
    </div>

    <section class="navigator">
      <h2><svg class="pin"><use href="#i-pin"/></svg>Part Navigator</h2>
      <div class="tree">
        <div class="tree-top">
          <div class="tree-clip">
            <table>
              <thead>
                <tr><th class="col-name">Name <i class="sort"></i></th><th>Comment</th></tr>
              </thead>
              <tbody>
                <tr><td><div class="node root"><button type="button" class="minus" aria-label="Collapse"></button><i class="stub"></i><svg><use href="#t-folder"/></svg>Model History</div></td><td></td></tr>
                <tr><td><label class="node"><i class="branch"></i><input type="checkbox" checked><svg><use href="#t-csys"/></svg>Datum Coordinate ...</label></td><td></td></tr>
                <tr><td><label class="node"><i class="branch"></i><input type="checkbox" checked><svg><use href="#t-sketch"/></svg>Sketch (1) "SKETCH...</label></td><td></td></tr>
                <tr><td><label class="node"><i class="branch"></i><input type="checkbox" checked><svg><use href="#i-ext"/></svg>Extrude (2)</label></td><td></td></tr>
                <tr><td><label class="node"><i class="branch"></i><input type="checkbox" checked><svg><use href="#t-inst"/></svg>Instance Geometry...</label></td><td></td></tr>
                <tr><td><label class="node"><i class="branch"></i><input type="checkbox" checked><svg><use href="#t-sketch"/></svg>Sketch (9) "SKETCH...</label></td><td></td></tr>
                <tr><td><label class="node"><i class="branch"></i><input type="checkbox" checked><svg><use href="#t-sketch"/></svg>Sketch (10) "SKETC...</label></td><td></td></tr>
                <tr><td><label class="node"><i class="branch"></i><input type="checkbox" checked><svg><use href="#i-ext"/></svg>Extrude (11)</label></td><td></td></tr>
                <tr><td><label class="node hidden"><i class="branch"></i><input type="checkbox" checked><svg><use href="#t-sketch"/></svg>Sketch (12) "SKETC...</label></td><td></td></tr>
                <tr><td><label class="node"><i class="branch"></i><input type="checkbox" checked><svg class="note"><use href="#t-info"/></svg><svg><use href="#i-ext"/></svg>Extrude (13)</label></td><td></td></tr>
                <tr><td><label class="node"><i class="branch"></i><input type="checkbox" checked><svg><use href="#i-unite"/></svg>Unite (14)</label></td><td></td></tr>
                <tr><td><label class="node"><i class="branch"></i><input type="checkbox" checked><svg><use href="#i-unite"/></svg>Unite (15)</label></td><td></td></tr>
                <tr><td><label class="node hidden"><i class="branch"></i><input type="checkbox" checked><svg><use href="#t-sketch"/></svg>Sketch (20) "SKETC...</label></td><td></td></tr>
                <tr><td><label class="node"><i class="branch"></i><input type="checkbox" checked><svg><use href="#i-ext"/></svg>Extrude (21)</label></td><td></td></tr>
                <tr><td><label class="node"><i class="branch"></i><input type="checkbox" checked><svg><use href="#t-inst"/></svg>Instance Geometry...</label></td><td></td></tr>
                <tr><td><label class="node hidden"><i class="branch"></i><input type="checkbox" checked><svg><use href="#t-sketch"/></svg>Sketch (27) "SKETC...</label></td><td></td></tr>
                <tr><td><label class="node"><i class="branch"></i><input type="checkbox" checked><svg><use href="#i-ext"/></svg>Extrude (28)</label></td><td></td></tr>
              </tbody>
            </table>
          </div>
          <div class="vscroll">
            <span class="cap"></span>
            <button type="button" class="arrow up" aria-label="Scroll up"></button>
            <span class="track"><span class="thumb"></span></span>
            <button type="button" class="arrow down" aria-label="Scroll down"></button>
          </div>
        </div>
        <div class="hscroll">
          <button type="button" class="arrow left" aria-label="Scroll left"></button>
          <span class="track"><span class="thumb"></span></span>
          <button type="button" class="arrow right" aria-label="Scroll right"></button>
        </div>
      </div>
      <div class="splitter"><span></span></div>
      <div class="sections">
        <button type="button">Dependencies<svg viewBox="0 0 12 12"><path d="M1 2l5 8 5-8" fill="none" stroke="#555" stroke-width="2.400"/></svg></button>
        <button type="button">Details<svg viewBox="0 0 12 12"><path d="M1 2l5 8 5-8" fill="none" stroke="#555" stroke-width="2.400"/></svg></button>
        <button type="button">Preview<svg viewBox="0 0 12 12"><path d="M1 2l5 8 5-8" fill="none" stroke="#555" stroke-width="2.400"/></svg></button>
      </div>
    </section>

    <section class="graphics">
      <svg viewBox="358 204 1008 488" role="img" aria-label="Wheel model">
        <defs>
          <linearGradient id="wallOut" gradientUnits="userSpaceOnUse" x1="1060" y1="400" x2="990" y2="600"><stop offset="0" stop-color="#2c2c2c"/><stop offset=".35" stop-color="#454545"/><stop offset=".7" stop-color="#2c2c2c"/><stop offset="1" stop-color="#1f1f1f"/></linearGradient>
          <linearGradient id="wallIn" gradientUnits="userSpaceOnUse" x1="680" y1="440" x2="790" y2="290"><stop offset="0" stop-color="#474747"/><stop offset=".5" stop-color="#3c3c3c"/><stop offset="1" stop-color="#292929"/></linearGradient>
          <path id="window" d="M23 -177.300L39.800 -119 10.800 -50 -12.400 -52.700 -32 -142 -21.700 -177A178.500 178.500 0 0 1 23 -177.300z"/>
          <path id="corner" d="M-44 -145L-84 -157A178.500 178.500 0 0 1 -29.500 -176z"/>
          <g id="blade">
            <path d="M23 -177.300A179 179 0 0 1 84.300 -158.800L86.600 -108.500 37 -51.600 10.800 -50 39.800 -119z" fill="#75ebff"/>
            <circle cx="36.500" cy="-165" r="4.900" fill="#505558"/>
            <circle cx="72.500" cy="-153.500" r="4.900" fill="#505558"/>
          </g>
          <linearGradient id="nutRing" x1="0" y1="0" x2="1" y2="1"><stop offset="0" stop-color="#8ea3ab"/><stop offset=".3" stop-color="#b4c6cc"/><stop offset=".7" stop-color="#c6d8dd"/><stop offset="1" stop-color="#dfeef0"/></linearGradient>
          <g id="nut">
            <circle r="14.500" fill="url(#nutRing)"/>
            <circle r="10.800" fill="#74858c"/>
            <circle r="9.600" cx="-.3" fill="#545454"/>
          </g>
          <mask id="openings" maskUnits="userSpaceOnUse" x="-200" y="-200" width="400" height="400">
            <circle r="197.500" fill="#fff"/>
            <g fill="#000">
              <use href="#window"/><use href="#window" transform="rotate(60)"/><use href="#window" transform="rotate(120)"/><use href="#window" transform="rotate(180)"/><use href="#window" transform="rotate(240)"/><use href="#window" transform="rotate(300)"/>
              <use href="#corner"/><use href="#corner" transform="rotate(60)"/><use href="#corner" transform="rotate(120)"/><use href="#corner" transform="rotate(180)"/><use href="#corner" transform="rotate(240)"/><use href="#corner" transform="rotate(300)"/>
            </g>
          </mask>
        </defs>
        <!-- barrel: outer wall, then inner wall seen through the openings -->
        <path fill="url(#wallOut)" fill-rule="evenodd" d="M680.300 523.700A196 196 0 0 1 1034.900 352.300L1044.400 374.200A195 195 0 0 1 691.600 546.500zM690 459.500a177 177 0 0 0 354 0a177 177 0 0 0 -354 0z"/>
        <path fill="url(#wallOut)" d="M1036 438A179 179 0 0 1 740 571L700 560A196 196 0 0 0 1063.800 460L1058 420z"/>
        <path fill="url(#wallIn)" fill-rule="evenodd" d="M672.600 438a185 185 0 0 1 370 0a185 185 0 0 1 -370 0zM690 459.500a177 177 0 0 0 354 0a177 177 0 0 0 -354 0z" clip-path="inset(0 0 130 0)"/>
        <!-- front face -->
        <g transform="translate(857.600 437.800)">
          <circle r="197.500" fill="#595959" mask="url(#openings)"/>
          <use href="#blade"/><use href="#blade" transform="rotate(60)"/><use href="#blade" transform="rotate(120)"/><use href="#blade" transform="rotate(180)"/><use href="#blade" transform="rotate(240)"/><use href="#blade" transform="rotate(300)"/>
        </g>
        <g fill="none" stroke="#2a36b8" stroke-width="2">
          <path d="M848 489q11 3 22 0M898 471q6-6 8-15M811 456q3 9 8 16M900 408q5 6 6 12"/>
          <path d="M837 262q-5 14-9 31" stroke="#3f4fd8"/>
        </g>
        <use href="#nut" x="839.500" y="409"/><use href="#nut" x="873" y="408"/><use href="#nut" x="891.500" y="436.500"/><use href="#nut" x="875.500" y="466"/><use href="#nut" x="842" y="467.500"/><use href="#nut" x="824" y="439"/>
        <!-- datum csys -->
        <g fill="none" stroke-width="1.200">
          <path d="M846 389L822 272" stroke="#dedede" stroke-width="1.500"/>
          <path d="M833 326L828 296M838 350l-5-24" stroke="#7478d0"/>
          <path d="M833 326.500L896 313M850 384L912 370" stroke="#8a8468"/>
          <path d="M896 313L913 376" stroke="#cdd2cc"/>
          <path d="M848 391L890 382" stroke="#f0e6e0" stroke-width="1.500"/>
          <path d="M890 382L964 367" stroke="#a09a7a"/>
          <path d="M866 388l24-5" stroke="#e07070" stroke-width="2"/>
        </g>
        <path d="M820 263L826 277H818z" fill="#9a8d5c"/><path d="M820 278l4-5 2 5z" fill="#f2f2f2"/>
        <path d="M978 362L961 364 963 370z" fill="#9a8d5c"/>
        <path d="M838 344q5 8 6 32l-7-24z" fill="#27a02b"/>
        <path d="M872 387q14-9 26-6-12 7-26 6z" fill="#f4a6a6"/>
        <path d="M838 383h8l-3-9" fill="none" stroke="#6b6440" stroke-width="1.500"/>
        <path d="M843 385l7 2-4 7z" fill="#1a2eb8"/>
        <g class="axis-text">
          <text x="812" y="262" fill="#d8d8d8">Y</text>
          <text x="979" y="367" fill="#8c8462">X</text>
          <text x="839" y="336" fill="#2c9a34">YC</text>
          <text x="887" y="375" fill="#c94646">XC</text>
          <text x="845" y="386" fill="#2438d8">ZC</text>
        </g>
        <!-- view triad -->
        <path d="M398 628l17-4 4 18-17 4z" fill="#d4d6d6" stroke="#a4a8a8"/>
        <path d="M398 628l2-2 15-4v2" fill="#eee" stroke="#a4a8a8"/>
        <circle cx="402" cy="647" r="4" fill="#8d9099"/>
        <path d="M398 628l-1-4" stroke="#26913a" stroke-width="2"/><path d="M395 617l5 9h-6z" fill="#26913a"/>
        <path d="M406 645l18-4" stroke="#cc2a30" stroke-width="2.500"/><path d="M431 640l-9-1 1 5z" fill="#cc2a30"/>
        <g class="axis-text small">
          <text x="390" y="618" fill="#26913a">Y</text>
          <text x="432" y="644" fill="#cc2a30">X</text>
          <text x="397" y="648" fill="#1838d0" font-weight="bold">Z</text>
        </g>
      </svg>
    </section>
  </main>

  <div class="toolbars row-sketch">
    <div class="group">
      <span class="grip"></span>
      <button type="button" class="tool" aria-label="Sketch in task environment"><svg><use href="#s-task"/></svg></button>
      <button type="button" class="text-tool" disabled><svg class="ico24"><use href="#i-flag"/></svg>Finish Sketch</button>
      <button type="button" class="tool" aria-label="Profile"><svg><use href="#s-profile"/></svg></button>
      <button type="button" class="tool" aria-label="Line"><svg><use href="#s-line"/></svg></button>
      <button type="button" class="tool" aria-label="Arc"><svg><use href="#s-arc"/></svg></button>
      <button type="button" class="tool" aria-label="Circle"><svg><use href="#s-circle"/></svg></button>
      <button type="button" class="tool" aria-label="Fillet"><svg><use href="#s-fillet"/></svg></button>
      <button type="button" class="tool" aria-label="Chamfer"><svg><use href="#s-chamfer"/></svg></button>
      <button type="button" class="tool" aria-label="Rectangle"><svg><use href="#s-rect"/></svg></button>
      <button type="button" class="tool" aria-label="Studio spline"><svg><use href="#s-spline"/></svg></button>
      <button type="button" class="tool" aria-label="Point"><svg><use href="#s-point"/></svg></button>
      <button type="button" class="tool" aria-label="Offset curve"><svg><use href="#s-offset"/></svg></button>
      <button type="button" class="drop" aria-label="Offset curve options"></button>
      <span class="sep"></span>
      <button type="button" class="tool" aria-label="Quick trim"><svg><use href="#s-trim"/></svg></button>
      <button type="button" class="tool" aria-label="Quick extend"><svg><use href="#s-extend"/></svg></button>
      <span class="sep"></span>
      <button type="button" class="tool" aria-label="Inferred dimensions"><svg><use href="#s-dim"/></svg></button>
      <button type="button" class="drop" aria-label="Dimension options"></button>
      <span class="sep"></span>
      <button type="button" class="tool" aria-label="Constraints"><svg><use href="#s-constr"/></svg></button>
      <button type="button" class="tool" aria-label="Show constraints"><svg><use href="#s-infer"/></svg></button>
      <button type="button" class="drop" aria-label="Constraint options"></button>
      <button type="button" class="drop low" aria-label="Toolbar options"></button>
    </div>
  </div>

  <footer class="taskbar">
    <button type="button" class="start" aria-label="Start"><svg><use href="#b-start"/></svg></button>
    <button type="button" class="task" aria-label="Internet Explorer"><svg><use href="#b-ie"/></svg></button>
    <button type="button" class="task" aria-label="Windows Explorer"><svg><use href="#b-folder"/></svg></button>
    <button type="button" class="task open" aria-label="Firefox"><svg><use href="#b-firefox"/></svg></button>
    <button type="button" class="task open current" aria-label="NX"><svg><use href="#i-nx"/></svg></button>
    <div class="tray">
      <button type="button" aria-label="Show hidden icons"><i class="tri up"></i></button>
      <button type="button" aria-label="Action Center"><svg><use href="#b-flag"/></svg></button>
      <button type="button" aria-label="Battery"><svg><use href="#b-battery"/></svg></button>
      <button type="button" aria-label="Network"><svg><use href="#b-signal"/></svg></button>
      <button type="button" aria-label="Volume"><svg><use href="#b-volume"/></svg></button>
      <time class="clock"><span>5:32 AM</span><span>9/7/2013</span></time>
      <button type="button" class="peek" aria-label="Show desktop"></button>
    </div>
  </footer>
</body>
</html>
```

FILE: styles.css
```css
* {
  margin: 0;
  padding: 0;
  box-sizing: border-box;
}
html, body {
  height: 100%;
}
body {
  display: flex;
  flex-direction: column;
  overflow: hidden;
  font-family: 'Noto Sans', 'Open Sans', sans-serif;
  font-size: 12px;
  line-height: 15px;
  color: #111;
  background: #d8d8d8;
}
button {
  border: 0;
  background: none;
  font: inherit;
  color: inherit;
}
svg {
  display: block;
  flex: none;
}
.sprite {
  position: absolute;
  width: 0;
  height: 0;
}
.ico16 {
  width: 16px;
  height: 16px;
}
.ico24 {
  width: 24px;
  height: 24px;
}
.tri {
  display: inline-block;
  border: 3px solid transparent;
  border-top-color: #000;
  border-bottom: 0;
}

/* title bar */
.titlebar {
  display: flex;
  align-items: center;
  height: 22px;
  flex: none;
  padding: 0 3px;
  gap: 5px;
  border-top: 1px solid #000;
  background: linear-gradient(#77777b, #47474a 30%, #1b1b1b 36%, #161616);
  color: #fff;
}
.titlebar h1 {
  flex: 1;
  font-family: 'Open Sans', sans-serif;
  font-size: 12px;
  font-weight: 400;
}
.brand {
  font-family: 'Open Sans', sans-serif;
  font-size: 14px;
  font-weight: 800;
  margin-right: 22px;
}
.win-buttons {
  display: flex;
  gap: 3px;
}
.win-buttons button {
  width: 18px;
  height: 18px;
  border: 1px solid #777;
  border-radius: 3px;
  background: linear-gradient(#8a8a8a, #444 45%, #1c1c1c 50%, #3a3a3a);
}
.win-buttons .close {
  border-color: #f0a090;
  background: linear-gradient(#ee8a78, #e04a34 45%, #d02c14 50%, #e65a3c);
}

/* menu bar */
.menubar {
  display: flex;
  align-items: center;
  height: 26px;
  flex: none;
  padding: 0 7px 0 4px;
  border-bottom: 1px solid #b8b8b8;
  background: linear-gradient(#eaeaea, #e2e2e2);
}
.menubar ul {
  display: flex;
  flex: 1;
  gap: 14px;
  margin-left: 5px;
  list-style: none;
}
.menubar a {
  color: #111;
  text-decoration: none;
}
.menubar .ico16 {
  margin-left: 2px;
}
.doc-buttons {
  display: flex;
  gap: 3px;
}
.doc-buttons button {
  width: 16px;
  height: 16px;
  border: 1px solid #777;
  border-radius: 3px;
  background: linear-gradient(#fff, #ddd);
}
.grip {
  width: 2px;
  align-self: stretch;
  margin: 5px 0;
  background: repeating-linear-gradient(#9a9a9a 0 2px, transparent 2px 4px);
}

/* tool bars */
.toolbars {
  display: flex;
  flex: none;
}
.group {
  display: flex;
  align-items: center;
  padding-left: 4px;
  border-right: 1px solid #b4b4b4;
  border-left: 1px solid #f0f0f0;
}
.group:first-child {
  border-left: 0;
}
.sep {
  width: 2px;
  align-self: stretch;
  margin: 1px 2px;
  border-left: 1px solid #b0b0b0;
  border-right: 1px solid #f4f4f4;
}
.row-standard {
  height: 34px;
  border-top: 1px solid #f0f0f0;
  border-bottom: 1px solid #b8b8b8;
  background: linear-gradient(#e2e2e2, #dadada);
}
.row-standard .group + .group .grip {
  margin-right: 2px;
}
.tool {
  display: flex;
  align-items: center;
  justify-content: center;
  width: 31px;
  height: 30px;
}
.tool svg {
  width: 22px;
  height: 22px;
}
.tool.swatch svg {
  width: 24px;
  height: 24px;
}
.text-tool {
  display: flex;
  align-items: center;
  gap: 4px;
  padding: 0 3px 0 5px;
}
.text-tool:disabled {
  color: #9a9a9a;
}
.finder {
  padding: 0 5px 0 3px;
}
.drop {
  display: flex;
  align-items: center;
  justify-content: center;
  width: 12px;
  height: 16px;
}
.drop::after {
  content: '';
  border: 3px solid transparent;
  border-top-color: #000;
  border-bottom: 0;
}
.drop.low {
  align-self: flex-end;
}
.row-feature {
  height: 69px;
  border-top: 1px solid #eee;
  border-bottom: 2px solid #989898;
  background: linear-gradient(#dcdcdc, #cbcbcb);
}
.row-feature .group {
  align-items: flex-start;
}
.row-feature .grip + .feature {
  margin-left: 3px;
}
.row-feature .sep {
  margin: 1px 3px 1px 5px;
}
.feature {
  display: flex;
  flex-direction: column;
  align-items: center;
  gap: 4px;
  width: 76px;
  padding: 5px 0 0;
}
.feature svg {
  width: 24px;
  height: 24px;
}
.row-feature .drop {
  width: 17px;
  margin: 26px -1px 0 0;
}

/* selection bar */
.selection-bar {
  display: flex;
  align-items: center;
  flex: none;
  height: 31px;
  padding: 0 3px 0 5px;
  border-bottom: 1px solid #b4b4b4;
  background: linear-gradient(#c2c2c2, #d6d6d6 70%);
}
.combo {
  position: relative;
  margin-right: 8px;
}
.combo.scope {
  margin-right: 5px;
}
.combo select {
  appearance: none;
  width: 100%;
  height: 20px;
  padding: 0 4px;
  border: 1px solid #555;
  border-radius: 3px;
  background: linear-gradient(#e8f3fc, #6fb0ea) right / 17px 100% no-repeat, #fff;
  font: inherit;
}
.combo .tri {
  position: absolute;
  right: 4px;
  top: 8px;
  border-width: 6px 5px 0;
}
.filter {
  width: 146px;
}
.scope {
  width: 154px;
}
.snap {
  display: flex;
  align-items: center;
  justify-content: center;
  width: 23px;
  height: 22px;
  border: 1px solid transparent;
  border-radius: 3px;
}
.snap svg {
  width: 19px;
  height: 19px;
}
.snap.on {
  border-color: #5c5c5c;
  background: #fff;
}
.selection-bar .last {
  margin-left: auto;
}

/* cue / status line */
.status-line {
  display: flex;
  align-items: stretch;
  flex: none;
  height: 22px;
  border-top: 1px solid #f0f0f0;
  border-bottom: 2px solid #858585;
  background: #d9d9d9;
}
.cue {
  flex: 637;
}
.message {
  flex: 631;
  padding: 1px 2px;
  border-left: 1px solid #f4f4f4;
  font-size: 13px;
  font-weight: 700;
}
.cell {
  width: 20px;
  border-left: 1px solid #aaa;
}
.cell.wide {
  width: 35px;
}
.icons {
  display: flex;
  align-items: center;
  gap: 6px;
  padding: 0 4px 0 3px;
  border-left: 1px solid #f4f4f4;
}
.icons svg {
  width: 15px;
  height: 15px;
}

/* work area */
.workspace {
  display: flex;
  flex: 1;
  min-height: 0;
}
.resource-bar {
  width: 33px;
  flex: none;
  padding: 17px 0 0 6px;
  background: #a6a6a6;
  border-right: 1px solid #777;
}
.tab {
  display: flex;
  align-items: center;
  justify-content: center;
  width: 26px;
  height: 40px;
  margin-bottom: 2px;
  border: 1px solid #6e6e6e;
  border-right: 0;
  border-radius: 4px 0 0 4px;
  background: linear-gradient(to right, #e2e2e2, #cfcfcf);
}
.tab svg {
  width: 24px;
  height: 24px;
}
.tab.active {
  width: 29px;
  height: 41px;
  margin: 0 0 1px -2px;
  background: #ebebeb;
}
.tab.apart {
  margin-top: 14px;
}
.tab.cut {
  height: 28px;
  border-radius: 4px 0 8px 8px;
}
.tab.cut svg {
  height: 22px;
}
.scrollers {
  padding: 4px 0 0 4px;
}
.scrollers button {
  display: block;
  width: 15px;
  height: 15px;
  margin-bottom: 1px;
  border: 1px solid #fff;
  border-right-color: #777;
  border-bottom-color: #777;
  background: #dcdcdc;
}
.navigator {
  display: flex;
  flex-direction: column;
  width: 325px;
  flex: none;
  padding: 0 9px 3px;
  border-right: 2px solid #808080;
  border-bottom: 1px solid #808080;
  background: #ebebeb;
}
.navigator h2 {
  display: flex;
  align-items: center;
  gap: 13px;
  height: 30px;
  padding-left: 6px;
  font-size: 13px;
  font-weight: 600;
}
.pin {
  width: 11px;
  height: 11px;
}
.tree {
  display: flex;
  flex-direction: column;
  flex: 1;
  min-height: 0;
  border: 1px solid #666;
  border-width: 2px 1px;
  background: #ebebeb;
}
.tree-top {
  display: flex;
  flex: 1;
  min-height: 0;
}
.tree-clip {
  flex: 1;
  overflow: hidden;
  background: #fff;
}
.tree table {
  width: 100%;
  border-collapse: collapse;
  table-layout: fixed;
}
.tree th, .cap {
  height: 19px;
  border-bottom: 1px solid #8a8a8a;
  background: linear-gradient(#f2f2f2, #e8e9ea 45%, #d6d8da 55%, #dcdee0);
}
.tree th {
  padding: 0 6px;
  text-align: left;
  font-weight: 400;
}
.tree .col-name {
  width: 200px;
  border-right: 1px solid #aaa;
}
.sort {
  display: inline-block;
  margin-left: 12px;
  border: 6px solid transparent;
  border-width: 0 5px 6px;
  border-bottom-color: #000;
}
.tree td {
  height: 20px;
  border-bottom: 1px solid #e0e0e0;
}
.tree td:first-child {
  border-right: 1px solid #e0e0e0;
}
.tree tbody tr:nth-child(even) td {
  background: #f7f7f7;
}
.node {
  display: flex;
  align-items: center;
  height: 19px;
  padding-left: 29px;
  white-space: nowrap;
  color: #333;
}
.node svg {
  width: 16px;
  height: 16px;
  margin: 0 3px 0 2px;
}
.node.hidden {
  color: #9f9f9f;
}
.node.root {
  padding-left: 5px;
}
.minus {
  width: 9px;
  height: 9px;
  border: 1px solid #888;
  border-radius: 1px;
  background: linear-gradient(#333, #333) center / 5px 1px no-repeat, #fff;
}
.stub {
  width: 4px;
  border-top: 1px dotted #999;
}
.branch {
  align-self: stretch;
  width: 11px;
  margin-right: 1px;
  border-left: 1px dotted #999;
  background: repeating-linear-gradient(to right, transparent 0 1px, #999 1px 2px) center / 100% 1px no-repeat;
}
.node input {
  appearance: none;
  width: 12px;
  height: 12px;
  border: 1px solid #000;
  background: #fff;
}
.node input:checked::before {
  content: '';
  display: block;
  height: 10px;
  background: #14b824;
  clip-path: polygon(0 45%, 22% 32%, 38% 52%, 82% 0, 100% 14%, 42% 100%);
}
.node .note {
  width: 12px;
  height: 13px;
  margin: -3px 0 0 -14px;
  z-index: 1;
}
.node .note + svg {
  margin-left: 4px;
}
.vscroll {
  display: flex;
  flex-direction: column;
  width: 17px;
  flex: none;
}
.track {
  flex: 1;
  display: flex;
}
.arrow {
  display: flex;
  align-items: center;
  justify-content: center;
  width: 17px;
  height: 17px;
}
.arrow::after {
  content: '';
  border: 3px solid transparent;
}
.arrow.up::after {
  border-bottom-color: #222;
  border-top: 0;
}
.arrow.down::after {
  border-top-color: #222;
  border-bottom: 0;
}
.arrow.left::after {
  border-right-color: #222;
  border-left: 0;
}
.arrow.right::after {
  border-left-color: #222;
  border-right: 0;
}
.thumb {
  border: 1px solid #8c8c8c;
  border-radius: 2px;
}
.vscroll .track {
  flex-direction: column;
  padding: 38px 1px 0 0;
}
.vscroll .thumb {
  height: 55%;
  background: repeating-linear-gradient(#555 0 1px, transparent 1px 3px) center / 7px 8px no-repeat, linear-gradient(to right, #f6f6f6, #c4c4c4);
}
.hscroll {
  display: flex;
  height: 17px;
  padding-right: 17px;
}
.hscroll .thumb {
  width: 92%;
  margin: 1px;
  background: repeating-linear-gradient(to right, #555 0 1px, transparent 1px 3px) center / 8px 7px no-repeat, linear-gradient(#f6f6f6, #c4c4c4);
}
.splitter {
  display: flex;
  align-items: center;
  justify-content: center;
  height: 12px;
  background: linear-gradient(#aaa, #aaa) center / 100% 1px no-repeat;
}
.splitter span {
  width: 53px;
  height: 6px;
  border: 1px solid #999;
  border-color: #fff #777 #777 #fff;
  background: #dcdcdc;
  outline: 4px solid #ebebeb;
}
.sections button {
  display: flex;
  align-items: center;
  justify-content: space-between;
  width: 100%;
  height: 23px;
  padding: 0 0 0 6px;
  border: 1px solid #999;
  border-top-color: #fff;
  background: linear-gradient(#f2f2f2, #e6e7e7 50%, #d6d8d9 55%, #dcdede);
  font-size: 13px;
  font-weight: 600;
}
.sections svg {
  width: 22px;
  height: 21px;
  padding: 5px;
  border-left: 1px solid #999;
}
.graphics {
  flex: 1;
  min-width: 0;
  background: linear-gradient(#b5b5b6, #e7e8ea 76%);
}
.graphics svg {
  width: 100%;
  height: 100%;
}
.axis-text {
  font-family: 'Liberation Sans', sans-serif;
  font-size: 13px;
}
.axis-text.small {
  font-size: 12px;
}

/* sketch tool bar */
.row-sketch {
  height: 37px;
  padding: 1px 0 1px 150px;
  background: linear-gradient(#e6e7e9, #cdcdcd);
}
.row-sketch .group, .row-sketch .group:first-child {
  border-left: 1px solid #f4f4f4;
}
.row-sketch .text-tool {
  padding: 0 7px 0 4px;
}

/* task bar */
.taskbar {
  display: flex;
  align-items: stretch;
  height: 39px;
  flex: none;
  border-top: 1px solid #6c7684;
  background: linear-gradient(to right, #080c14, #0e1824 30%, #122236 50%, #0f1b2a 75%, #070b12);
  color: #fff;
}
.start {
  display: flex;
  align-items: center;
  justify-content: center;
  width: 54px;
}
.start svg {
  width: 38px;
  height: 38px;
}
.task {
  display: flex;
  align-items: center;
  justify-content: center;
  width: 58px;
  margin-left: 4px;
}
.start + .task {
  margin-left: 6px;
}
.task svg {
  width: 32px;
  height: 32px;
}
.task.open {
  border: 1px solid #99a0a8;
  border-radius: 3px;
  background: linear-gradient(150deg, #7c8188, #3a4048 45%, #22272e 50%, #363c44);
}
.task.current {
  border-color: #e4e6e8;
  background: linear-gradient(150deg, #d6d8da, #9fa2a5 45%, #85888c 50%, #b0b2b5);
}
.tray {
  display: flex;
  align-items: center;
  margin-left: auto;
}
.tray button {
  display: flex;
  align-items: center;
  justify-content: center;
  width: 24px;
}
.tray svg {
  width: 16px;
  height: 16px;
}
.tri.up {
  border: 4px solid transparent;
  border-bottom-color: #fff;
  border-top: 0;
}
.clock {
  display: flex;
  flex-direction: column;
  align-items: center;
  width: 76px;
  line-height: 17px;
}
.tray .peek {
  align-self: stretch;
  width: 13px;
  border: 1px solid #6a7078;
  background: linear-gradient(#5c6066, #14181e 50%);
}
```
